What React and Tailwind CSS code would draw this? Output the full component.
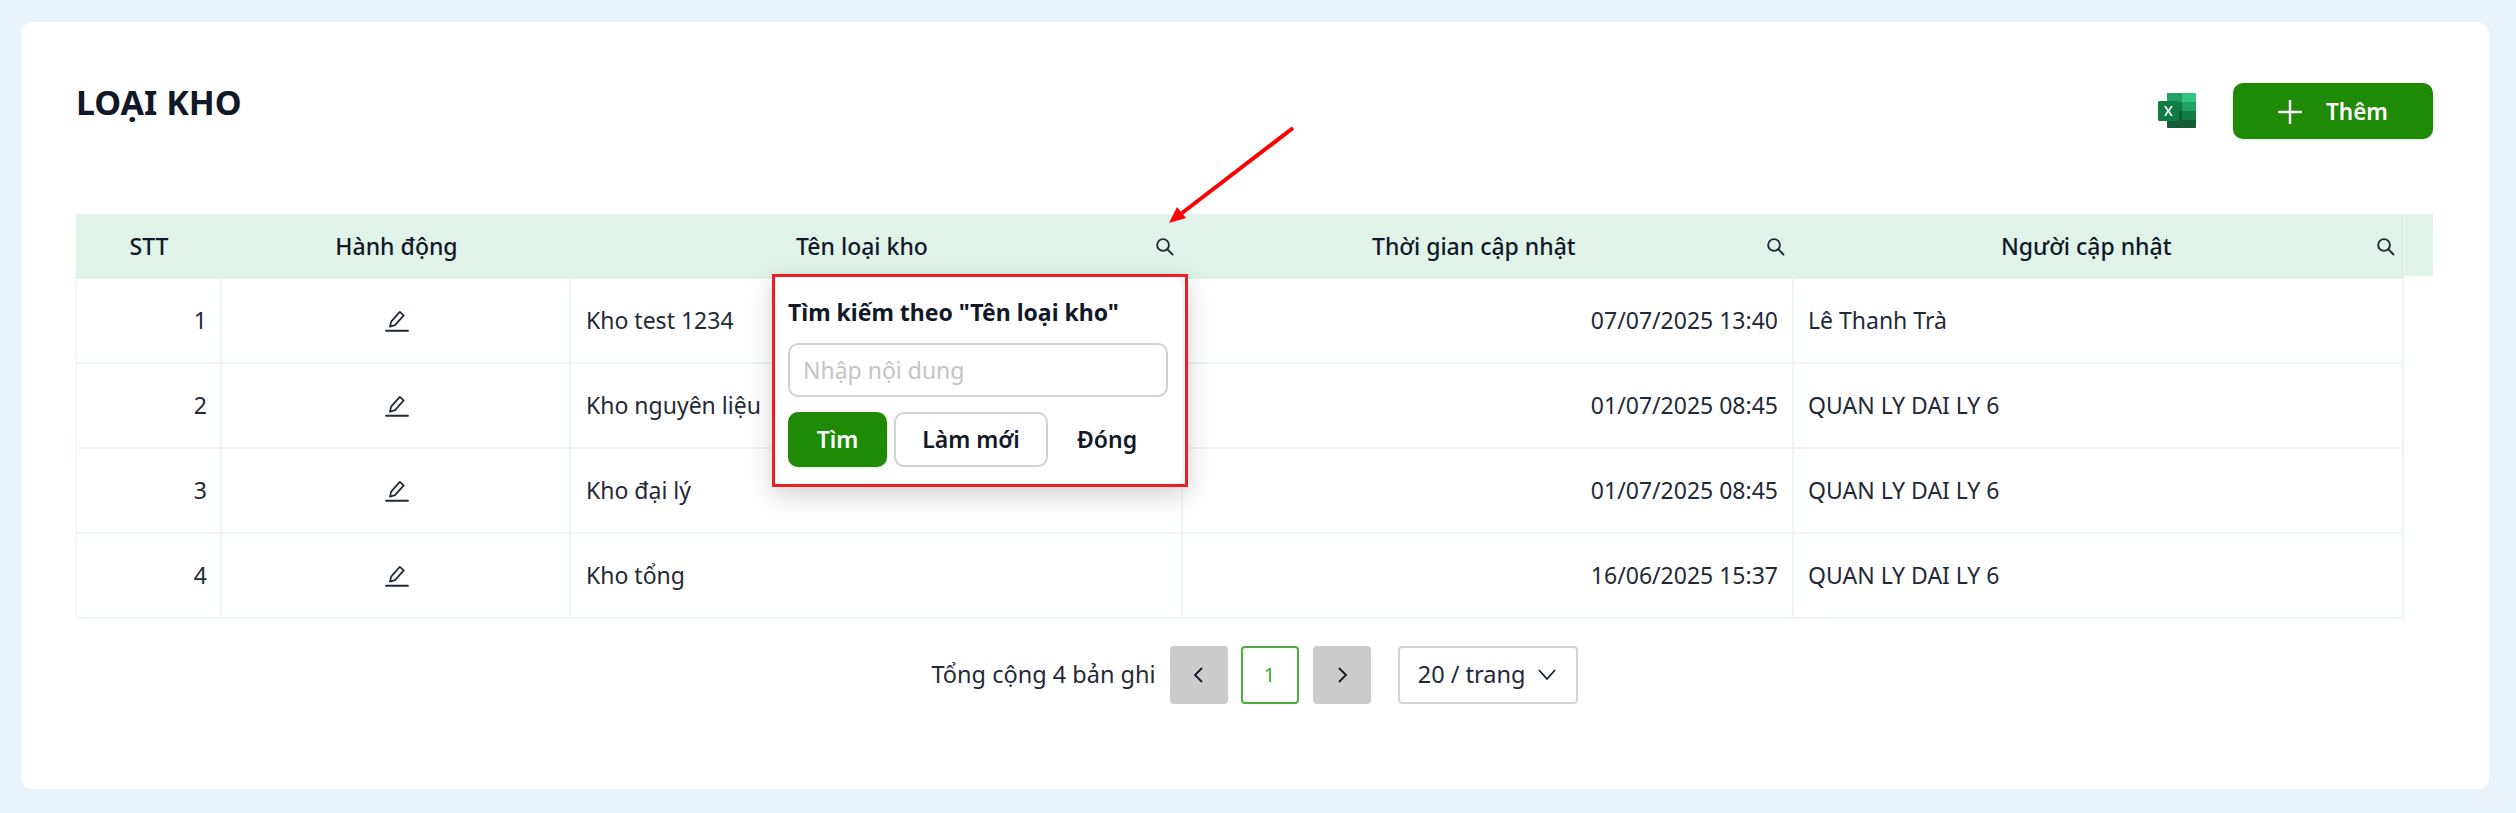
import React from "react";

const COLS = "grid grid-cols-[146px_349px_612px_611px_610px]";
const rows = [
  ["1", "Kho test 1234", "07/07/2025 13:40", "Lê Thanh Trà"],
  ["2", "Kho nguyên liệu", "01/07/2025 08:45", "QUAN LY DAI LY 6"],
  ["3", "Kho đại lý", "01/07/2025 08:45", "QUAN LY DAI LY 6"],
  ["4", "Kho tổng", "16/06/2025 15:37", "QUAN LY DAI LY 6"],
];

function Search() {
  return (
    <svg viewBox="0 0 20 20" className="w-[21px] h-[21px] shrink-0" fill="none" stroke="#1f2937" strokeWidth="1.8" strokeLinecap="round">
      <circle cx="8.6" cy="8.6" r="5.6" />
      <path d="M12.8 12.8 L17.6 17.6" />
    </svg>
  );
}

function Edit() {
  return (
    <svg viewBox="0 0 24 24" className="w-[26px] h-[26px]" fill="none" stroke="#1f2937" strokeWidth="1.6" strokeLinejoin="round" strokeLinecap="round">
      <path d="M5.5 17.2 L6.6 12.6 L14.6 3.6 L18.2 6.8 L10.2 15.8 Z" />
      <path d="M2 21 H22" strokeWidth="2" />
    </svg>
  );
}

function Excel() {
  return (
    <svg viewBox="0 0 38 36" className="w-[38px] h-[36px]">
      <path d="M9 1 a1 1 0 0 1 1-1 H37 a1 1 0 0 1 1 1 V9 H9 Z" fill="#33c481" />
      <path d="M9 0 H24 V9 H9 Z" fill="#21a366" />
      <rect x="9" y="9" width="15" height="9" fill="#107c41" />
      <rect x="24" y="9" width="14" height="9" fill="#21a366" />
      <rect x="9" y="18" width="15" height="9" fill="#185c37" />
      <rect x="24" y="18" width="14" height="9" fill="#107c41" />
      <path d="M9 27 H38 V34 a1 1 0 0 1-1 1 H10 a1 1 0 0 1-1-1 Z" fill="#185c37" />
      <rect x="0" y="8" width="21" height="20" rx="1.5" fill="#107c41" />
      <path d="M6 13 L9.2 18 L6 23 H8 L10.4 19.2 L12.8 23 H14.8 L11.6 18 L14.8 13 H12.8 L10.4 16.8 L8 13 Z" fill="#fff" />
    </svg>
  );
}

function Arrow() {
  return (
    <svg viewBox="0 0 140 110" className="absolute left-[1160px] top-[124px] w-[140px] h-[110px] z-20">
      <path d="M133 4 L22 89" stroke="#ff0000" strokeWidth="4" />
      <path d="M9 99 L17 83 L26 94 Z" fill="#ff0000" />
    </svg>
  );
}

export default function App() {
  return (
    <div className="w-[2516px] h-[813px] bg-[#eaf3fa] pt-[22px] pl-[21px] text-[#111827] overflow-hidden font-['Noto_Sans','Open_Sans',sans-serif] relative">
      <div className="w-[2468px] h-[767px] bg-white rounded-[12px] pl-[55px] pr-[56px] relative">
        <div className="flex items-start justify-between pt-[58px] h-[192px]">
          <h1 className="text-[34px] leading-[44px] font-bold m-0">LOẠI KHO</h1>
          <div className="flex items-start pt-[3px]">
            <div className="mr-[37px] mt-[10px]"><Excel /></div>
            <button className="w-[200px] h-[56px] rounded-[10px] bg-[#1f8a05] text-white text-[22.5px] font-semibold flex items-center justify-center gap-[24px] shadow-sm pt-[2px]">
              <svg viewBox="0 0 24 24" className="w-[24px] h-[24px]" stroke="#fff" strokeWidth="2.4"><path d="M12 0 V24 M0 12 H24" /></svg>
              Thêm
            </button>
          </div>
        </div>

        <div className="w-[2357px]">
          <div className="flex items-start text-[23px] font-medium">
            <div className={COLS + " h-[65px] w-[2328px] items-center text-center bg-[#e0f3e9]"}>
              <div>STT</div>
              <div>Hành động</div>
              <div className="flex items-center pl-[225px] pr-[8px] justify-between">
                <span>Tên loại kho</span><Search />
              </div>
              <div className="flex items-center pl-[189px] pr-[8px] justify-between">
                <span>Thời gian cập nhật</span><Search />
              </div>
              <div className="flex items-center pl-[207px] pr-[8px] justify-between">
                <span>Người cập nhật</span><Search />
              </div>
            </div>
            <div className="w-[29px] h-[62px] bg-[#e0f3e9] border-l border-[#ecf6f4]"></div>
          </div>

          <div className="w-[2328px] border-r-2 border-[#ecf6f4]">
            {rows.map((r) => (
              <div key={r[0]} className={COLS + " h-[85px] border-b-2 border-[#ecf6f4] text-[23px] text-[#1f2937] items-stretch"}>
                <div className="flex items-center justify-end pr-[13px] border-r-2 border-l border-[#ecf6f4]">{r[0]}</div>
                <div className="flex items-center justify-center pl-[2px] border-r-2 border-[#ecf6f4]"><Edit /></div>
                <div className="flex items-center pl-[15px] border-r-2 border-[#ecf6f4]">{r[1]}</div>
                <div className="flex items-center justify-end pr-[14px] border-r-2 border-[#ecf6f4]">{r[2]}</div>
                <div className="flex items-center pl-[14px]">{r[3]}</div>
              </div>
            ))}
          </div>

          <div className="flex items-center justify-center mt-[27px] h-[58px] text-[23.5px] text-[#1f2937]">
            <span className="mr-[14px]">Tổng cộng 4 bản ghi</span>
            <button className="w-[58px] h-[58px] rounded-[4px] bg-[#cbcbcb] flex items-center justify-center">
              <svg viewBox="0 0 20 20" className="w-[20px] h-[20px]" fill="none" stroke="#111827" strokeWidth="1.8"><path d="M13 3 L6 10 L13 17" /></svg>
            </button>
            <button className="w-[58px] h-[58px] ml-[13px] rounded-[4px] border-2 border-[#4caf3f] text-[#3aa32c] text-[20px] flex items-center justify-center bg-white">1</button>
            <button className="w-[58px] h-[58px] ml-[14px] rounded-[4px] bg-[#cbcbcb] flex items-center justify-center">
              <svg viewBox="0 0 20 20" className="w-[20px] h-[20px]" fill="none" stroke="#111827" strokeWidth="1.8"><path d="M7 3 L14 10 L7 17" /></svg>
            </button>
            <div className="w-[180px] h-[58px] ml-[27px] rounded-[4px] border-2 border-[#d4d4d8] flex items-center justify-center gap-[12px] bg-white">
              <span>20 / trang</span>
              <svg viewBox="0 0 20 20" className="w-[20px] h-[20px]" fill="none" stroke="#111827" strokeWidth="1.7"><path d="M2 5 L10 14 L18 5" /></svg>
            </div>
          </div>
        </div>
      </div>

      <Arrow />

      <div className="absolute left-[772px] top-[274px] w-[416px] h-[213px] border-[3px] border-[#ee1c25] bg-[#f6f6f6] shadow-[0_8px_24px_rgba(0,0,0,0.18)] z-10">
        <div className="w-[407px] h-[207px] bg-white rounded-br-[10px] rounded-tr-[10px] pl-[13px] pt-[19px]">
          <div className="text-[23px] leading-[32px] font-bold text-[#111827] whitespace-nowrap">Tìm kiếm theo "Tên loại kho"</div>
          <div className="w-[380px] h-[54px] mt-[15px] border-2 border-[#d1d1d6] rounded-[10px] flex items-center pl-[13px] text-[23px] text-[#c4c4c8] font-normal">Nhập nội dung</div>
          <div className="flex items-center mt-[15px] text-[23px] font-semibold">
            <button className="w-[99px] h-[55px] rounded-[10px] bg-[#1f8a05] text-white shadow-sm">Tìm</button>
            <button className="w-[154px] h-[55px] ml-[7px] rounded-[10px] border-2 border-[#d1d1d6] text-[#111827] bg-white">Làm mới</button>
            <button className="w-[92px] h-[55px] ml-[13px] text-[#111827]">Đóng</button>
          </div>
        </div>
      </div>
    </div>
  );
}
